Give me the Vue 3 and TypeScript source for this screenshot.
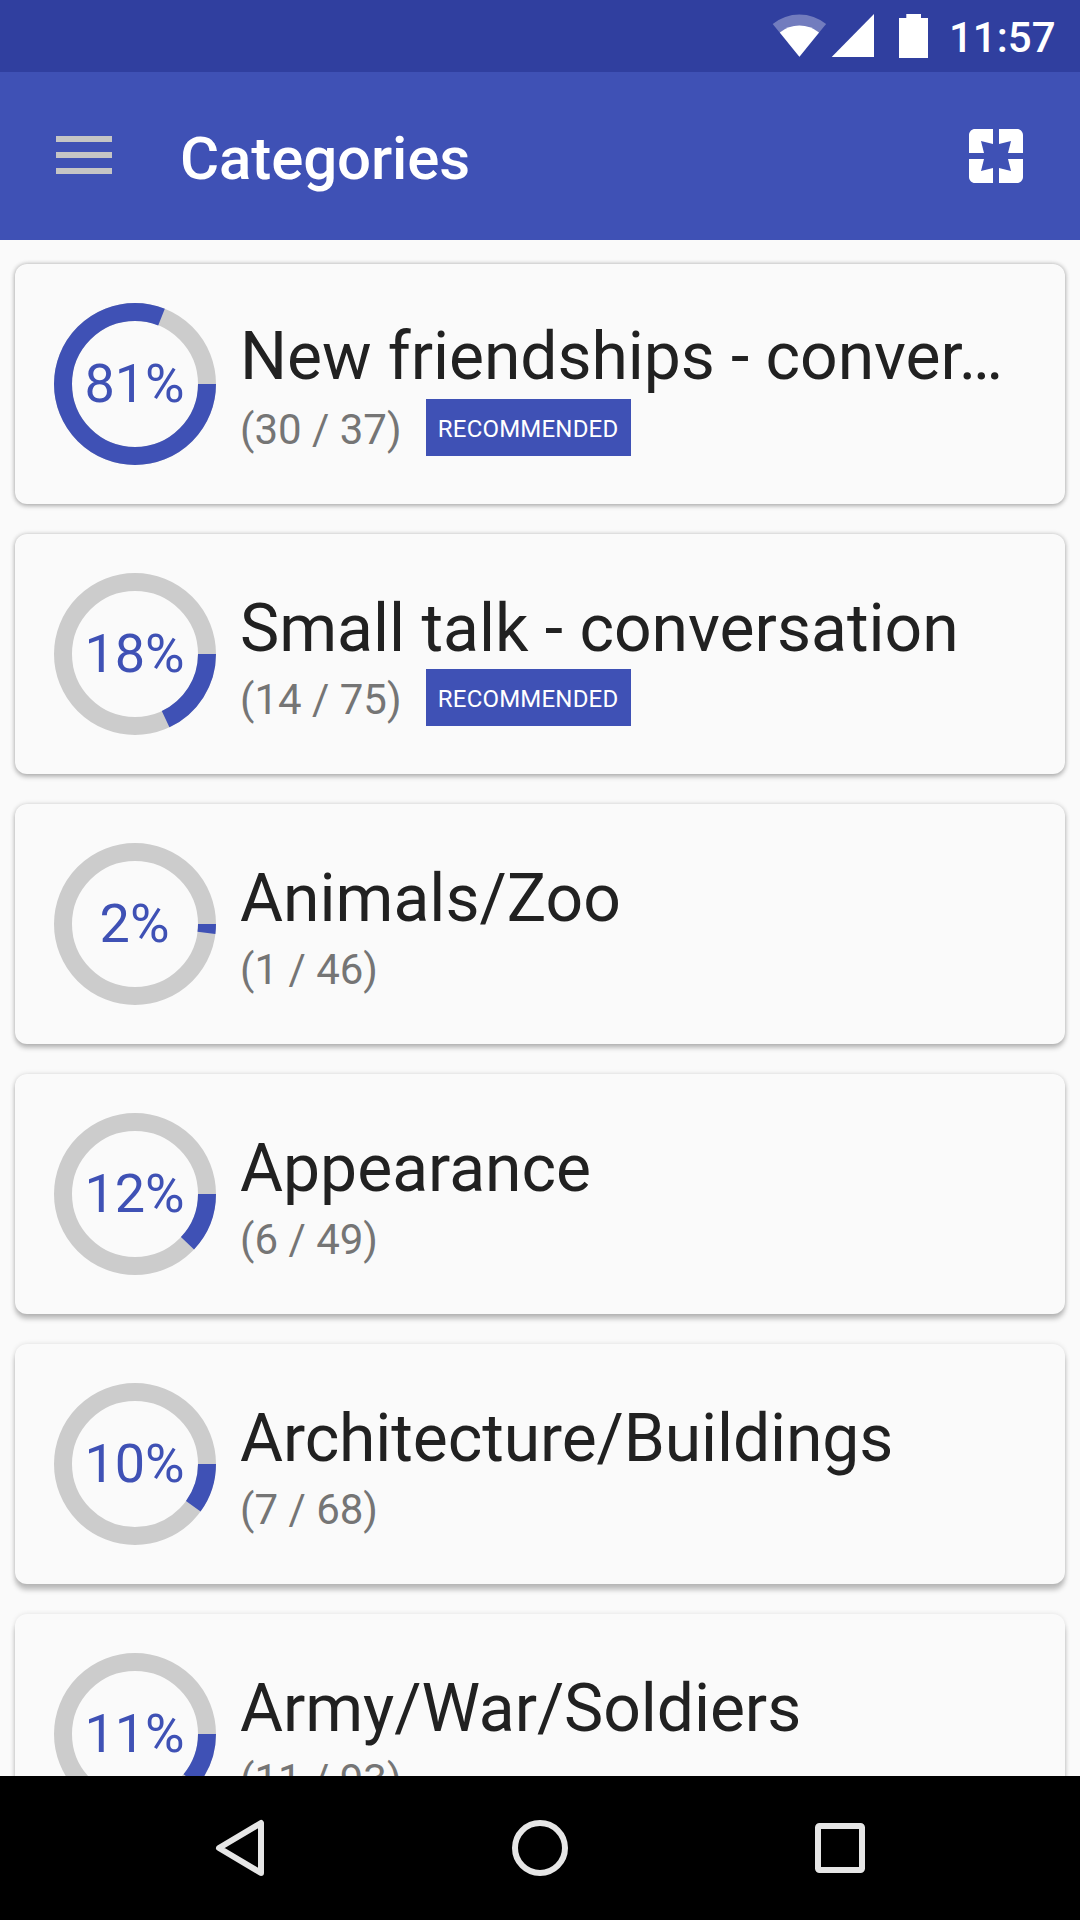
<script setup lang="ts">
interface Category {
  name: string
  done: number
  total: number
  percent: number
  shortened?: boolean
  recommended?: boolean
  tracking?: number
}

const categories: Category[] = [
  { name: 'New friendships - conver', shortened: true, done: 30, total: 37, percent: 81, recommended: true, tracking: -0.06 },
  { name: 'Small talk - conversation', done: 14, total: 75, percent: 18, recommended: true },
  { name: 'Animals/Zoo', done: 1, total: 46, percent: 2 },
  { name: 'Appearance', done: 6, total: 49, percent: 12 },
  { name: 'Architecture/Buildings', done: 7, total: 68, percent: 10, tracking: -0.09 },
  { name: 'Army/War/Soldiers', done: 11, total: 93, percent: 11, tracking: -0.07 },
]

function cardShadow(index: number): string {
  const drop = (1.8 + index * 1.05).toFixed(2)
  const ambient = (0.2 - index * 0.02).toFixed(3)
  return `0 ${drop}px 5px rgba(0,0,0,0.23), 0 0 5px rgba(0,0,0,${ambient})`
}
</script>

<template>
  <div class="screen">
    <header class="status">
      <svg class="wifi" width="56" height="46" viewBox="0 0 56 46">
        <path d="M28.4 44.8 1.7 12A42.5 42.5 0 0 1 55.1 12Z" fill="#fff" fill-opacity=".32" />
        <path d="M28.4 44.8 8.8 20.5A31.3 31.3 0 0 1 48 20.5Z" fill="#fff" />
      </svg>
      <svg class="signal" width="44" height="46" viewBox="0 0 44 46">
        <path d="M0.7 45 43 2v43Z" fill="#fff" />
      </svg>
      <svg class="battery" width="29" height="44" viewBox="0 0 29 44">
        <path d="M7.3 0h14.7v4H29v40H0V4h7.3Z" fill="#fff" />
      </svg>
      <span class="clock">11:57</span>
    </header>

    <div class="toolbar">
      <div class="menu"><i></i><i></i><i></i></div>
      <h1>Categories</h1>
      <svg width="72" height="72" viewBox="0 0 24 24" fill="#fff">
        <path d="M3 5v6h5L7 7l4 1V3H5c-1.1 0-2 .9-2 2zm5 8H3v6c0 1.1.9 2 2 2h6v-5l-4 1 1-4zm9 4l-4-1v5h6c1.1 0 2-.9 2-2v-6h-5l1 4zm2-14h-6v5l4-1-1 4h5V5c0-1.1-.9-2-2-2z" />
      </svg>
    </div>

    <main class="list">
      <article
        v-for="(c, i) in categories"
        :key="c.name"
        class="card"
        :style="{ boxShadow: cardShadow(i) }"
      >
        <svg class="ring" width="162" height="162" viewBox="0 0 162 162">
          <circle cx="81" cy="81" r="72" fill="none" stroke="#ccc" stroke-width="18" />
          <circle
            cx="81" cy="81" r="72" fill="none" stroke="#3f51b5" stroke-width="18"
            pathLength="100" :stroke-dasharray="`${c.percent} 100`"
          />
          <text x="80.5" y="99" text-anchor="middle">{{ c.percent }}%</text>
        </svg>
        <div class="info">
          <h2 :class="{ shortened: c.shortened }" :style="{ letterSpacing: `${c.tracking ?? 0}px` }">{{ c.name }}<span v-if="c.shortened" class="dots">…</span></h2>
          <div class="meta">
            <span class="count">({{ c.done }} / {{ c.total }})</span>
            <span v-if="c.recommended" class="badge">RECOMMENDED</span>
          </div>
        </div>
      </article>
    </main>

    <nav class="navbar">
      <svg width="60" height="60" viewBox="0 0 60 60">
        <path d="M51 5v50L9 30Z" />
      </svg>
      <svg width="60" height="60" viewBox="0 0 60 60">
        <circle cx="30" cy="30" r="25" />
      </svg>
      <svg width="60" height="60" viewBox="0 0 60 60">
        <rect x="8" y="8" width="44" height="44" rx="1.5" />
      </svg>
    </nav>
  </div>
</template>

<style>
body {
  margin: 0;
}
</style>

<style scoped>
.screen {
  display: flex;
  flex-direction: column;
  width: 1080px;
  height: 1920px;
  overflow: hidden;
  background: #fafafa;
  font-family: Roboto, sans-serif;
}
.status {
  flex: none;
  box-sizing: border-box;
  display: flex;
  align-items: flex-start;
  height: 72px;
  padding: 12px 24px 0 0;
  justify-content: flex-end;
  background: #303f9f;
  color: #fff;
}
.signal {
  margin-left: 4px;
}
.battery {
  margin: 2px 21px 0 24px;
}
.clock {
  width: 107px;
  font-size: 42px;
  font-weight: 500;
  line-height: 52px;
  white-space: nowrap;
}
.toolbar {
  flex: none;
  box-sizing: border-box;
  display: flex;
  align-items: center;
  height: 168px;
  padding: 0 48px 0 56px;
  background: #3f51b5;
  color: #fff;
}
.menu {
  display: flex;
  flex-direction: column;
  gap: 10px;
  width: 56px;
  margin-bottom: 2px;
}
.menu i {
  height: 6px;
  background: #c5c5c5;
}
h1 {
  flex: 1;
  margin: 6px 0 0 68px;
  font-size: 60px;
  font-weight: 500;
  line-height: 70px;
  letter-spacing: -0.12px;
}
.list {
  flex: 1;
  min-height: 0;
  overflow: hidden;
  display: flex;
  flex-direction: column;
  gap: 30px;
  padding: 24px 15px 0;
}
.card {
  flex: none;
  box-sizing: border-box;
  display: flex;
  align-items: center;
  gap: 24px;
  height: 240px;
  padding: 0 39px;
  border-radius: 12px;
  background: #fafafa;
}
.ring {
  flex: none;
}
.ring text {
  font-size: 54px;
  fill: #3f51b5;
}
.info {
  flex: 1;
  display: flex;
  flex-direction: column;
  min-width: 0;
  height: 134px;
}
h2 {
  margin: 1px 0 -1px;
  height: 82px;
  font-size: 66px;
  font-weight: 400;
  line-height: 82px;
  color: #212121;
  white-space: nowrap;
}
h2.shortened {
  margin: -1px 0 1px;
}
.dots {
  margin-left: -4px;
}
.meta {
  display: flex;
  align-items: center;
  height: 57px;
}
.count {
  font-size: 42px;
  line-height: 57px;
  padding-top: 4px;
  color: #757575;
}
.badge {
  box-sizing: border-box;
  width: 205px;
  height: 57px;
  margin-left: 24px;
  background: #3f51b5;
  color: #fff;
  font-size: 24px;
  line-height: 61px;
  letter-spacing: 0.2px;
  text-align: center;
}
.navbar {
  flex: none;
  display: flex;
  justify-content: center;
  align-items: center;
  gap: 240px;
  height: 144px;
  background: #000;
}
.navbar svg {
  fill: none;
  stroke: #e6e6e6;
  stroke-width: 6;
  stroke-linejoin: round;
}
</style>
